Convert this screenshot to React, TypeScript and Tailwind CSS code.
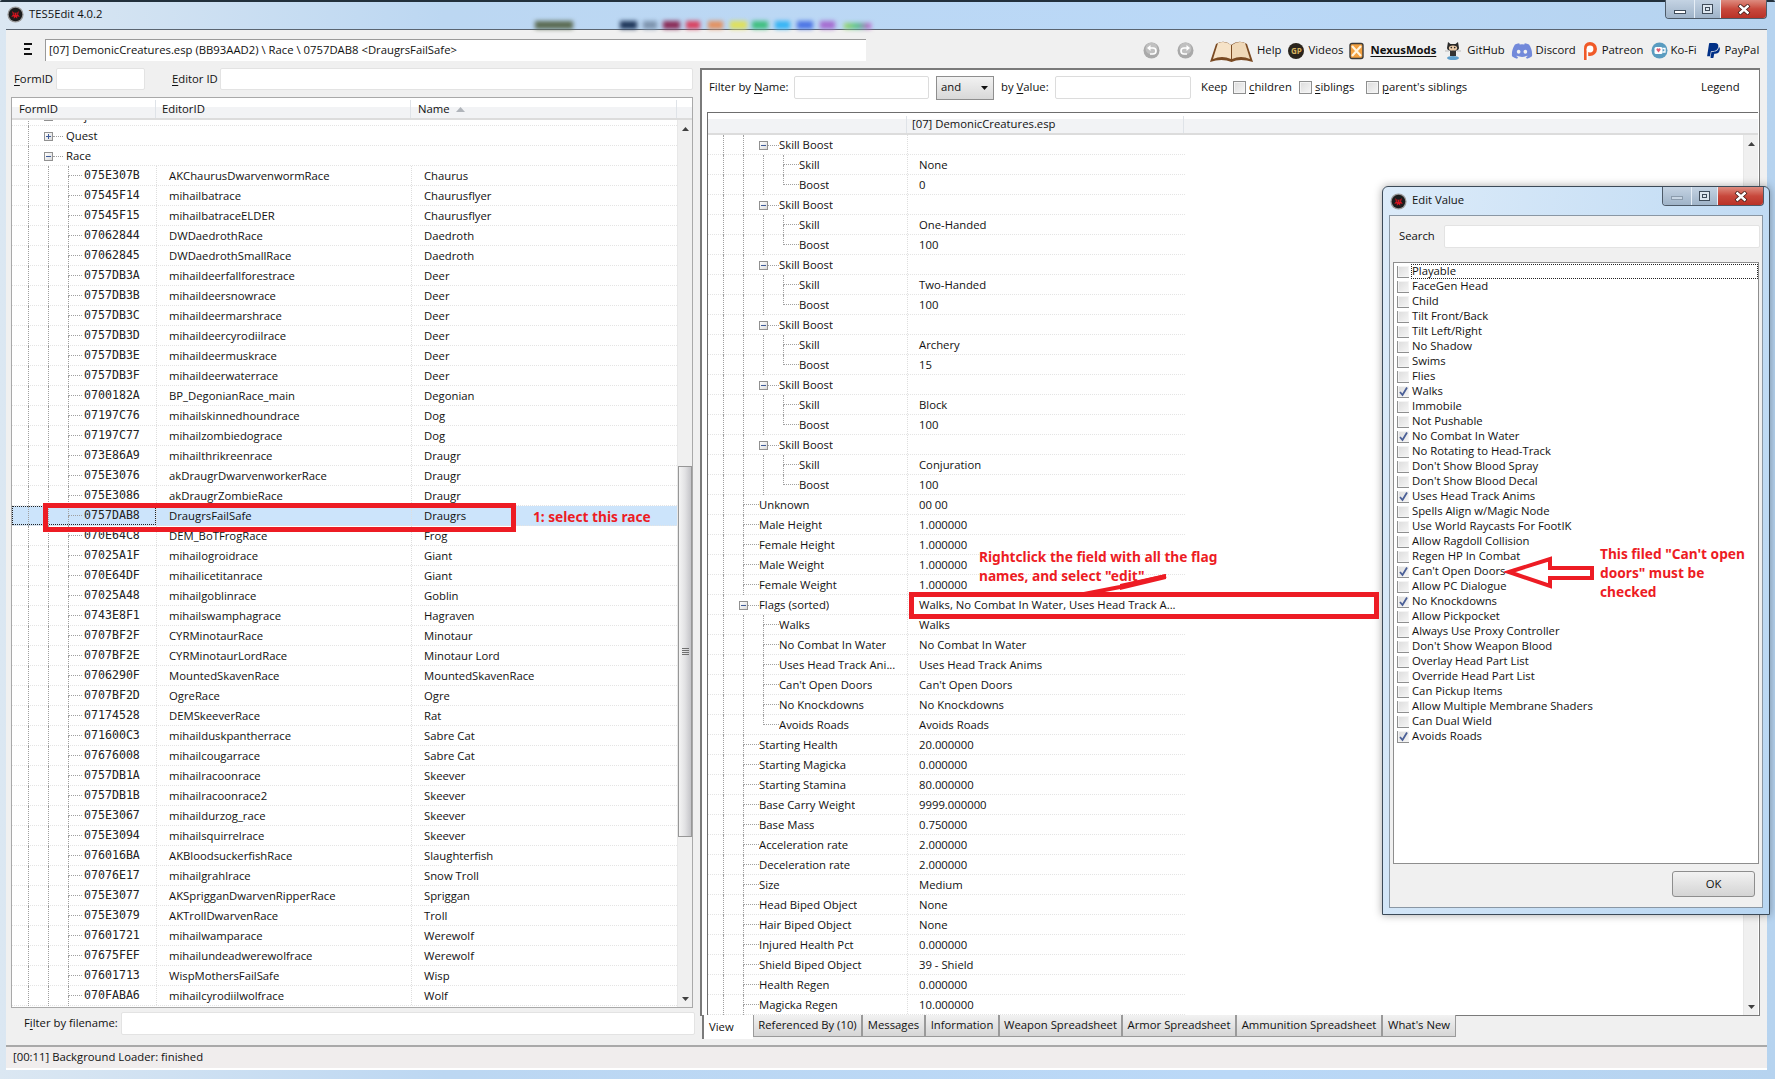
import React from "react";
import { FaDiscord, FaPaypal } from "react-icons/fa";

const races: [string, string, string][] = [
  ["075E307B", "AKChaurusDwarvenwormRace", "Chaurus"],
  ["07545F14", "mihailbatrace", "Chaurusflyer"],
  ["07545F15", "mihailbatraceELDER", "Chaurusflyer"],
  ["07062844", "DWDaedrothRace", "Daedroth"],
  ["07062845", "DWDaedrothSmallRace", "Daedroth"],
  ["0757DB3A", "mihaildeerfallforestrace", "Deer"],
  ["0757DB3B", "mihaildeersnowrace", "Deer"],
  ["0757DB3C", "mihaildeermarshrace", "Deer"],
  ["0757DB3D", "mihaildeercyrodiilrace", "Deer"],
  ["0757DB3E", "mihaildeermuskrace", "Deer"],
  ["0757DB3F", "mihaildeerwaterrace", "Deer"],
  ["0700182A", "BP_DegonianRace_main", "Degonian"],
  ["07197C76", "mihailskinnedhoundrace", "Dog"],
  ["07197C77", "mihailzombiedograce", "Dog"],
  ["073E86A9", "mihailthrikreenrace", "Draugr"],
  ["075E3076", "akDraugrDwarvenworkerRace", "Draugr"],
  ["075E3086", "akDraugrZombieRace", "Draugr"],
  ["0757DAB8", "DraugrsFailSafe", "Draugrs"],
  ["070E64C8", "DEM_BoTFrogRace", "Frog"],
  ["07025A1F", "mihailogroidrace", "Giant"],
  ["070E64DF", "mihailicetitanrace", "Giant"],
  ["07025A48", "mihailgoblinrace", "Goblin"],
  ["0743E8F1", "mihailswamphagrace", "Hagraven"],
  ["0707BF2F", "CYRMinotaurRace", "Minotaur"],
  ["0707BF2E", "CYRMinotaurLordRace", "Minotaur Lord"],
  ["0706290F", "MountedSkavenRace", "MountedSkavenRace"],
  ["0707BF2D", "OgreRace", "Ogre"],
  ["07174528", "DEMSkeeverRace", "Rat"],
  ["071600C3", "mihailduskpantherrace", "Sabre Cat"],
  ["07676008", "mihailcougarrace", "Sabre Cat"],
  ["0757DB1A", "mihailracoonrace", "Skeever"],
  ["0757DB1B", "mihailracoonrace2", "Skeever"],
  ["075E3067", "mihaildurzog_race", "Skeever"],
  ["075E3094", "mihailsquirrelrace", "Skeever"],
  ["076016BA", "AKBloodsuckerfishRace", "Slaughterfish"],
  ["07076E17", "mihailgrahlrace", "Snow Troll"],
  ["075E3077", "AKSprigganDwarvenRipperRace", "Spriggan"],
  ["075E3079", "AKTrollDwarvenRace", "Troll"],
  ["07601721", "mihailwamparace", "Werewolf"],
  ["07675FEF", "mihailundeadwerewolfrace", "Werewolf"],
  ["07601713", "WispMothersFailSafe", "Wisp"],
  ["070FABA6", "mihailcyrodiilwolfrace", "Wolf"],
];

type RT = { l: number; kind: "box" | "leaf"; label: string; value?: string; last?: boolean };
const skills: [string, string][] = [
  ["None", "0"],
  ["One-Handed", "100"],
  ["Two-Handed", "100"],
  ["Archery", "15"],
  ["Block", "100"],
  ["Conjuration", "100"],
];
const recordRows: RT[] = [
  ...skills.flatMap(([s, b]): RT[] => [
    { l: 2, kind: "box", label: "Skill Boost" },
    { l: 3, kind: "leaf", label: "Skill", value: s },
    { l: 3, kind: "leaf", label: "Boost", value: b, last: true },
  ]),
  { l: 1, kind: "leaf", label: "Unknown", value: "00 00" },
  { l: 1, kind: "leaf", label: "Male Height", value: "1.000000" },
  { l: 1, kind: "leaf", label: "Female Height", value: "1.000000" },
  { l: 1, kind: "leaf", label: "Male Weight", value: "1.000000" },
  { l: 1, kind: "leaf", label: "Female Weight", value: "1.000000" },
  { l: 1, kind: "box", label: "Flags (sorted)", value: "Walks, No Combat In Water, Uses Head Track A..." },
  { l: 2, kind: "leaf", label: "Walks", value: "Walks" },
  { l: 2, kind: "leaf", label: "No Combat In Water", value: "No Combat In Water" },
  { l: 2, kind: "leaf", label: "Uses Head Track Ani...", value: "Uses Head Track Anims" },
  { l: 2, kind: "leaf", label: "Can't Open Doors", value: "Can't Open Doors" },
  { l: 2, kind: "leaf", label: "No Knockdowns", value: "No Knockdowns" },
  { l: 2, kind: "leaf", label: "Avoids Roads", value: "Avoids Roads", last: true },
  { l: 1, kind: "leaf", label: "Starting Health", value: "20.000000" },
  { l: 1, kind: "leaf", label: "Starting Magicka", value: "0.000000" },
  { l: 1, kind: "leaf", label: "Starting Stamina", value: "80.000000" },
  { l: 1, kind: "leaf", label: "Base Carry Weight", value: "9999.000000" },
  { l: 1, kind: "leaf", label: "Base Mass", value: "0.750000" },
  { l: 1, kind: "leaf", label: "Acceleration rate", value: "2.000000" },
  { l: 1, kind: "leaf", label: "Deceleration rate", value: "2.000000" },
  { l: 1, kind: "leaf", label: "Size", value: "Medium" },
  { l: 1, kind: "leaf", label: "Head Biped Object", value: "None" },
  { l: 1, kind: "leaf", label: "Hair Biped Object", value: "None" },
  { l: 1, kind: "leaf", label: "Injured Health Pct", value: "0.000000" },
  { l: 1, kind: "leaf", label: "Shield Biped Object", value: "39 - Shield" },
  { l: 1, kind: "leaf", label: "Health Regen", value: "0.000000" },
  { l: 1, kind: "leaf", label: "Magicka Regen", value: "10.000000" },
];

const flags: [string, boolean][] = [
  ["Playable", false], ["FaceGen Head", false], ["Child", false], ["Tilt Front/Back", false],
  ["Tilt Left/Right", false], ["No Shadow", false], ["Swims", false], ["Flies", false],
  ["Walks", true], ["Immobile", false], ["Not Pushable", false], ["No Combat In Water", true],
  ["No Rotating to Head-Track", false], ["Don't Show Blood Spray", false], ["Don't Show Blood Decal", false],
  ["Uses Head Track Anims", true], ["Spells Align w/Magic Node", false], ["Use World Raycasts For FootIK", false],
  ["Allow Ragdoll Collision", false], ["Regen HP In Combat", false], ["Can't Open Doors", true],
  ["Allow PC Dialogue", false], ["No Knockdowns", true], ["Allow Pickpocket", false],
  ["Always Use Proxy Controller", false], ["Don't Show Weapon Blood", false], ["Overlay Head Part List", false],
  ["Override Head Part List", false], ["Can Pickup Items", false], ["Allow Multiple Membrane Shaders", false],
  ["Can Dual Wield", false], ["Avoids Roads", true],
];

const tabs: [string, string][] = [
  ["Referenced By (10)", "w-[109px]"],
  ["Messages", "w-[63px]"],
  ["Information", "w-[74px]"],
  ["Weapon Spreadsheet", "w-[123px]"],
  ["Armor Spreadsheet", "w-[114px]"],
  ["Ammunition Spreadsheet", "w-[146px]"],
  ["What's New", "w-[74px]"],
];

const spots = [
  "ml-[55px] w-[38px] bg-[#5a6a50]", "ml-[47px] w-[17px] bg-[#1d3558]", "ml-[6px] w-[14px] bg-[#7d93ad]",
  "ml-[6px] w-[17px] bg-[#8a2a55]", "ml-[6px] w-[14px] bg-[#d9415f]", "ml-[8px] w-[15px] bg-[#e39160]",
  "ml-[7px] w-[17px] bg-[#dfe05a]", "ml-[5px] w-[16px] bg-[#3fbf7f]", "ml-[7px] w-[15px] bg-[#35b4f4]",
  "ml-[7px] w-[16px] bg-[#4c74e4]", "ml-[7px] w-[15px] bg-[#a56cd0]",
];

function AppIcon({ size = 17 }: { size?: number }) {
  return (
    <svg width={size} height={size} viewBox="0 0 20 20" className="shrink-0">
      <circle cx="10" cy="10" r="9.5" fill="#9a9a9a" />
      <circle cx="10" cy="10" r="8" fill="#1c1c1c" />
      <path d="M6 6 L8 8 H12 L14 6 L13 10 L15 13 L12 12 L12 15 L10 13 L8 15 L8 12 L5 13 L7 10 Z" fill="#d8121e" />
      <circle cx="8.5" cy="9.5" r="0.9" fill="#222" />
      <circle cx="11.5" cy="9.5" r="0.9" fill="#222" />
    </svg>
  );
}

function WinControls({ faded }: { faded?: boolean }) {
  return (
    <div className="flex h-[19px] w-[102px] shrink-0 overflow-hidden rounded-b-[4px] border border-t-0 border-[#4d5a68]">
      <div className="flex w-[29px] items-center justify-center border-r border-[#e6eef6] bg-gradient-to-b from-[#c4d3e3] to-[#9fb3c8]">
        <div className={faded ? "mt-[3px] h-[4px] w-[12px] border border-[#8c9cad] bg-[#c8d6e4]" : "mt-[6px] h-[4px] w-[12px] border border-[#3f4c5a] bg-white"} />
      </div>
      <div className="flex w-[26px] items-center justify-center border-r border-[#e6eef6] bg-gradient-to-b from-[#c4d3e3] to-[#9fb3c8]">
        <div className="flex h-[10px] w-[11px] items-center justify-center border border-[#3f4c5a] bg-[#dde6ef]">
          <div className="h-[4px] w-[5px] border border-[#3f4c5a]" />
        </div>
      </div>
      <div className="flex flex-1 items-center justify-center bg-gradient-to-b from-[#dd8b7f] via-[#c8483c] to-[#b93227]">
        <svg width="14" height="11" viewBox="0 0 14 11">
          <path d="M2 1 L12 10 M12 1 L2 10" stroke="#3d1a16" strokeWidth="4" />
          <path d="M2.5 1.5 L11.5 9.5 M11.5 1.5 L2.5 9.5" stroke="#fff" strokeWidth="2.4" />
        </svg>
      </div>
    </div>
  );
}

function Check({ checked }: { checked?: boolean }) {
  return (
    <div className="flex h-[13px] w-[13px] shrink-0 items-center justify-center border border-[#8e8f8f] bg-gradient-to-br from-[#dcdcdc] to-[#f6f6f6] shadow-[inset_0_0_0_1px_#f4f4f4]">
      {checked && (
        <svg width="11" height="11" viewBox="0 0 11 11">
          <path d="M2 6 L4.5 9 L9 1.5" fill="none" stroke="#4a5f97" strokeWidth="1.8" />
        </svg>
      )}
    </div>
  );
}

function TreeBox({ open }: { open?: boolean }) {
  return (
    <div className="relative z-10 flex h-[9px] w-[9px] shrink-0 items-center justify-center border border-[#919191] bg-gradient-to-br from-white to-[#dcdcdc]">
      <div className="relative h-px w-[5px] bg-[#3f5c9a]">
        {!open && <div className="absolute left-[2px] top-[-2px] h-[5px] w-px bg-[#3f5c9a]" />}
      </div>
    </div>
  );
}

function Guide() {
  return <div className="h-[20px] w-[20px] shrink-0 border-l border-dotted border-[#a0a0a0]" />;
}

function Leaf({ width, last }: { width: string; last?: boolean }) {
  return (
    <div className={`h-[20px] shrink-0 ${width}`}>
      <div className="h-[10px] border-b border-l border-dotted border-[#a0a0a0]" />
      {!last && <div className="h-[10px] border-l border-dotted border-[#a0a0a0]" />}
    </div>
  );
}

function BoxNode({ open }: { open?: boolean }) {
  return (
    <div className="flex h-[20px] w-[18px] shrink-0 items-center">
      <div className="ml-[-4px]">
        <TreeBox open={open} />
      </div>
      <div className="h-px w-[10px] border-b border-dotted border-[#a0a0a0]" />
    </div>
  );
}

function Scrollbar({ thumb }: { thumb?: boolean }) {
  return (
    <div className="flex w-[15px] shrink-0 flex-col border-l border-[#e8e8e8] bg-[#f0f0f0]">
      <div className="flex h-[17px] shrink-0 items-center justify-center text-[#404040]">
        <svg width="7" height="4" viewBox="0 0 7 4"><path d="M3.5 0 L7 4 H0 Z" fill="currentColor" /></svg>
      </div>
      {thumb ? (
        <>
          <div className="h-[329px] shrink-0" />
          <div className="flex h-[371px] shrink-0 items-center justify-center border border-[#979797] bg-gradient-to-r from-[#f4f4f4] via-[#e2e2e4] to-[#c4c4c8]">
            <div className="flex flex-col gap-px">
              <div className="h-px w-[7px] bg-[#707070]" />
              <div className="h-px w-[7px] bg-[#707070]" />
              <div className="h-px w-[7px] bg-[#707070]" />
              <div className="h-px w-[7px] bg-[#707070]" />
            </div>
          </div>
        </>
      ) : null}
      <div className="flex-1" />
      <div className="flex h-[17px] shrink-0 items-center justify-center text-[#404040]">
        <svg width="7" height="4" viewBox="0 0 7 4"><path d="M3.5 4 L7 0 H0 Z" fill="currentColor" /></svg>
      </div>
    </div>
  );
}

function U({ children }: { children: React.ReactNode }) {
  return <span className="underline underline-offset-2">{children}</span>;
}

function CircleBtn({ redo }: { redo?: boolean }) {
  return (
    <svg width="17" height="17" viewBox="0 0 17 17" className="shrink-0">
      <circle cx="8.5" cy="8.5" r="8" fill="#a9a9a9" />
      <circle cx="8.5" cy="6.5" r="6" fill="#c0c0c0" />
      <g transform={redo ? "translate(17,0) scale(-1,1)" : undefined}>
        <path d="M6 6 H10 A3 3 0 0 1 10 12 H7" fill="none" stroke="#fff" strokeWidth="1.6" />
        <path d="M7.5 3 L4 6 L7.5 9 Z" fill="#fff" />
      </g>
    </svg>
  );
}

function Toolbar() {
  return (
    <div className="flex h-[38px] shrink-0 items-center">
      <div className="ml-[18px] flex w-[21px] shrink-0 flex-col gap-[3px]">
        <div className="h-[2px] w-[8px] bg-[#111]" />
        <div className="h-[2px] w-[6px] bg-[#111]" />
        <div className="h-[2px] w-[8px] bg-[#111]" />
      </div>
      <div className="mt-[1px] flex h-[22px] w-[821px] shrink-0 items-center border-l border-t border-[#9a9a9a] bg-white pl-[3px]">
        [07] DemonicCreatures.esp (BB93AAD2) \ Race \ 0757DAB8 &lt;DraugrsFailSafe&gt;
      </div>
      <div className="ml-[277px] mt-[3px] flex shrink-0 items-center">
        <CircleBtn />
        <div className="ml-[17px]"><CircleBtn redo /></div>
        <svg width="43" height="24" viewBox="0 0 43 24" className="ml-[16px] shrink-0">
          <path d="M0 23 L6 5 Q14 0 21 6 Q29 0 37 5 L43 23 Q30 19 21.5 23 Q12 19 0 23 Z" fill="#7a4a22" />
          <path d="M3 20 L8 4 Q15 1 21 6 V20 Q12 16 3 20 Z" fill="#f6e3c8" />
          <path d="M40 20 L35 4 Q28 1 22 6 V20 Q31 16 40 20 Z" fill="#efd8b8" />
        </svg>
        <span className="ml-[4px]">Help</span>
        <div className="ml-[7px] flex h-[16px] w-[16px] items-center justify-center rounded-full bg-[#2a241c] text-[8px] font-bold text-[#d6b25e]">GP</div>
        <span className="ml-[4px]">Videos</span>
        <svg width="15" height="18" viewBox="0 0 15 18" className="ml-[6px] shrink-0">
          <rect x="1" y="1.5" width="13" height="15" rx="2" fill="#f2a040" stroke="#3a3a3a" strokeWidth="1.4" />
          <path d="M3 4 L12 14 M12 4 L3 14" stroke="#fff3dc" strokeWidth="2.2" />
        </svg>
        <span className="ml-[6px] font-bold underline underline-offset-2">NexusMods</span>
        <svg width="16" height="20" viewBox="0 0 16 20" className="ml-[9px] shrink-0">
          <path d="M3 1 L5.5 3 H10.5 L13 1 L14 7 Q14 10 8 10 Q2 10 2 7 Z" fill="#2b2b2b" />
          <ellipse cx="8" cy="7" rx="4.2" ry="2.6" fill="#eac9a6" />
          <circle cx="6.3" cy="6.6" r="0.8" fill="#222" />
          <circle cx="9.7" cy="6.6" r="0.8" fill="#222" />
          <rect x="5" y="10" width="6" height="5" fill="#333" />
          <path d="M0 10 H4 M12 10 H16" stroke="#bbb" />
          <ellipse cx="8" cy="17" rx="6" ry="2" fill="#5f9fcc" />
        </svg>
        <span className="ml-[6px]">GitHub</span>
        <FaDiscord size={22} className="ml-[6px] shrink-0 text-[#7289da]" />
        <span className="ml-[3px]">Discord</span>
        <svg width="16" height="20" viewBox="0 0 16 20" className="ml-[6px] shrink-0">
          <path d="M8 1 A7 7 0 0 1 8 15 H6 V19 H2 V8 A6 6 0 0 1 8 1 Z" fill="#f05a28" />
          <circle cx="8" cy="8" r="3.4" fill="#fff" />
          <rect x="4.6" y="8" width="1.6" height="11" fill="#fff" />
        </svg>
        <span className="ml-[4px]">Patreon</span>
        <svg width="17" height="17" viewBox="0 0 17 17" className="ml-[7px] shrink-0">
          <circle cx="8.5" cy="8.5" r="8" fill="#5a9cc0" />
          <rect x="3.5" y="5" width="8" height="7" rx="1.5" fill="#fff" />
          <path d="M11.5 6.5 H14 V10 H11.5" fill="none" stroke="#fff" strokeWidth="1.3" />
          <path d="M7.5 10.5 L5.5 8 A1.1 1.1 0 0 1 7.5 7 A1.1 1.1 0 0 1 9.5 8 Z" fill="#e05a70" />
        </svg>
        <span className="ml-[3px]">Ko-Fi</span>
        <FaPaypal size={17} className="ml-[8px] shrink-0 text-[#003087]" />
        <span className="ml-[3px]">PayPal</span>
      </div>
    </div>
  );
}

function LeftColumn() {
  return (
    <div className="flex w-[692px] shrink-0 flex-col whitespace-nowrap">
      <div className="flex h-[29px] shrink-0 items-start pl-[8px]">
        <span className="mt-[3px] w-[42px] shrink-0"><U>F</U>ormID</span>
        <div className="h-[22px] w-[89px] shrink-0 rounded-[2px] border border-[#e3e3e3] bg-white" />
        <span className="ml-[27px] mt-[3px] w-[48px] shrink-0"><U>E</U>ditor ID</span>
        <div className="h-[22px] w-[473px] shrink-0 rounded-[2px] border border-[#e3e3e3] bg-white" />
      </div>
      <div className="ml-[5px] flex h-[911px] w-[682px] shrink-0 flex-col border border-[#a9a9a9] bg-white">
        <div className="flex h-[22px] shrink-0 border-b-2 border-[#dcdcdc] bg-[linear-gradient(#ffffff_45%,#f2f3f5_45%)] pt-[2px]">
          <div className="flex w-[144px] shrink-0 items-center border-r border-[#dfe3e8] pl-[7px]">FormID</div>
          <div className="flex w-[255px] shrink-0 items-center border-r border-[#dfe3e8] pl-[6px]">EditorID</div>
          <div className="flex w-[266px] shrink-0 items-center gap-[6px] border-r border-[#dfe3e8] pl-[7px]">
            Name
            <svg width="9" height="5" viewBox="0 0 9 5"><path d="M4.5 0 L9 5 H0 Z" fill="#b0b4ba" /></svg>
          </div>
        </div>
        <div className="flex min-h-0 flex-1">
          <div className="min-w-0 flex-1 overflow-hidden">
            <div className="mt-[-14px]">
              <LeftTop label="Projectile" />
              <LeftTop label="Quest" />
              <LeftTop label="Race" open />
              {races.map((r) => {
                const sel = r[2] === "Draugrs";
                return (
                  <div key={r[0]} className={`flex h-[20px] border-b border-dotted border-[#e4e4e4] ${sel ? "bg-[#cce4fb]" : ""}`}>
                    <div className={`flex w-[144px] shrink-0 pl-[16px] ${sel ? "outline-1 outline-dotted outline-offset-[-1px] outline-[#222]" : ""}`}>
                      <Guide />
                      <Guide />
                      <Leaf width="w-[14px]" />
                      <span className="ml-[2px] leading-[19px] font-['DejaVu_Sans_Mono',monospace] text-[11.6px] text-[#222]">{r[0]}</span>
                    </div>
                    <div className="w-[255px] shrink-0 truncate border-l border-dotted border-[#dedede] pl-[12px] leading-[19px]">{r[1]}</div>
                    <div className="flex-1 truncate border-l border-dotted border-[#dedede] pl-[12px] leading-[19px]">{r[2]}</div>
                  </div>
                );
              })}
            </div>
          </div>
          <Scrollbar thumb />
        </div>
      </div>
      <div className="flex flex-1 items-center pl-[18px] pb-[6px]">
        <span className="w-[97px] shrink-0">F<U>i</U>lter by filename:</span>
        <div className="h-[23px] w-[574px] shrink-0 rounded-[2px] border border-[#e3e3e3] bg-white" />
      </div>
    </div>
  );
}

function LeftTop({ label, open }: { label: string; open?: boolean }) {
  return (
    <div className="flex h-[20px] border-b border-dotted border-[#e4e4e4] pl-[16px]">
      <Guide />
      <BoxNode open={open} />
      <span className="leading-[19px]">{label}</span>
    </div>
  );
}

function RightColumn() {
  return (
    <div className="ml-[2px] flex min-w-0 flex-1 flex-col whitespace-nowrap pr-[7px]">
      <div className="flex h-[948px] shrink-0 flex-col border-l-[2px] border-r border-t-[2px] border-b-[1px] border-[#7a7a7a] bg-white">
        <div className="flex h-[42px] shrink-0 items-center pb-[7px] pl-[7px]">
          <span className="w-[85px] shrink-0">Filter by <U>N</U>ame:</span>
          <div className="h-[23px] w-[135px] shrink-0 rounded-[2px] border border-[#dcdcdc] bg-white" />
          <div className="ml-[7px] flex h-[24px] w-[58px] shrink-0 items-center justify-between border border-[#8e8e8e] bg-gradient-to-b from-[#f2f2f2] to-[#d8d8d8] pl-[4px] pr-[5px]">
            and
            <svg width="7" height="4" viewBox="0 0 7 4"><path d="M3.5 4 L7 0 H0 Z" fill="#111" /></svg>
          </div>
          <span className="ml-[7px] w-[54px] shrink-0">by <U>V</U>alue:</span>
          <div className="h-[23px] w-[136px] shrink-0 rounded-[2px] border border-[#dcdcdc] bg-white" />
          <span className="ml-[10px] w-[32px] shrink-0">Keep</span>
          <Check /><span className="ml-[3px] w-[50px] shrink-0"><U>c</U>hildren</span>
          <Check /><span className="ml-[3px] w-[51px] shrink-0"><U>s</U>iblings</span>
          <Check /><span className="ml-[3px] w-[319px] shrink-0"><U>p</U>arent's siblings</span>
          <span>Legend</span>
        </div>
        <div className="ml-[5px] mr-[1px] flex min-h-0 flex-1 flex-col border-l border-t border-[#6e6e6e]">
          <div className="flex h-[22px] shrink-0 border-b-2 border-[#dcdcdc] bg-[linear-gradient(#ffffff_30%,#f2f3f5_30%)] pt-[3px]">
            <div className="w-[199px] shrink-0 border-r border-[#dfe3e8]" />
            <div className="flex w-[277px] shrink-0 items-center border-r border-[#dfe3e8] pl-[5px]">[07] DemonicCreatures.esp</div>
          </div>
          <div className="flex min-h-0 flex-1">
            <div className="min-w-0 flex-1 overflow-hidden">
              {recordRows.map((r, i) => (
                <div key={i} className="flex h-[20px]">
                  <div className="flex w-[477px] shrink-0 border-b border-dotted border-[#e4e4e4]">
                    <div className="flex w-[199px] shrink-0 pl-[15px]">
                      <Guide />
                      {r.l >= 2 && <Guide />}
                      {r.l >= 3 && <Guide />}
                      {r.kind === "box" ? (
                        <div className="flex h-[20px] w-[16px] shrink-0 items-center">
                          <div className="ml-[-4px]"><TreeBox open /></div>
                          <div className="h-px w-[11px] border-b border-dotted border-[#a0a0a0]" />
                        </div>
                      ) : (
                        <Leaf width="w-[16px]" last={r.last} />
                      )}
                      <span className="truncate leading-[19px]">{r.label}</span>
                    </div>
                    <div className="flex-1 truncate border-l border-dotted border-[#dedede] pl-[11px] leading-[19px]">{r.value ?? ""}</div>
                  </div>
                </div>
              ))}
            </div>
            <Scrollbar />
          </div>
        </div>
      </div>
      <div className="ml-[2px] mt-[-1px] flex h-[26px] shrink-0 items-start">
        <div className="flex h-[24px] w-[51px] shrink-0 items-center border-l-[2px] border-[#7a7a7a] bg-white pl-[5px]">View</div>
        {tabs.map(([t, w]) => (
          <div key={t} className={`flex h-[22px] shrink-0 items-center justify-center border-x border-b border-[#9a9a9a] bg-gradient-to-b from-[#f2f2f2] to-[#d6d6d6] ${w}`}>{t}</div>
        ))}
      </div>
    </div>
  );
}

function EditDialog() {
  return (
    <div className="absolute left-[1382px] top-[186px] flex h-[729px] w-[388px] flex-col whitespace-nowrap rounded-t-[6px] border border-[#3c4a58] bg-[linear-gradient(100deg,#dcebf9,#b8d6f2)] shadow-[0_0_8px_rgba(0,0,0,0.35)]">
      <div className="flex h-[28px] shrink-0 items-start">
        <div className="ml-[7px] mt-[6px]"><AppIcon size={17} /></div>
        <span className="ml-[5px] mt-[5px] flex-1">Edit Value</span>
        <div className="mr-[5px]"><WinControls faded /></div>
      </div>
      <div className="mx-[6px] mb-[6px] flex min-h-0 flex-1 flex-col border border-[#8a97a4] bg-[#f0f0f0]">
        <div className="mt-[9px] flex h-[23px] shrink-0 items-center pl-[9px]">
          <span className="w-[45px] shrink-0">Search</span>
          <div className="h-[23px] w-[316px] shrink-0 rounded-[2px] border border-[#e3e3e3] bg-white" />
        </div>
        <div className="mx-[3px] mt-[14px] flex h-[602px] shrink-0 flex-col border border-[#8e8e8e] bg-white pl-[3px] pt-[1px]">
          {flags.map(([f, c], i) => (
            <div key={f} className="flex h-[15px] shrink-0 items-center">
              <div className="h-[12px] w-[12px] shrink-0 overflow-hidden">
                <div className="ml-[-0.5px] mt-[-0.5px]"><Check checked={c} /></div>
              </div>
              <div className={`ml-[2px] flex h-[15px] w-[350px] items-center pl-[1px] ${i === 0 ? "outline-1 outline-dotted outline-offset-[-1px] outline-[#222]" : ""}`}>{f}</div>
            </div>
          ))}
        </div>
        <div className="mt-[7px] flex justify-end pr-[7px]">
          <div className="flex h-[26px] w-[83px] items-center justify-center rounded-[3px] border border-[#8e8e8e] bg-gradient-to-b from-[#f2f2f2] to-[#d4d4d4]">OK</div>
        </div>
      </div>
    </div>
  );
}

function Notes() {
  const red = "absolute whitespace-nowrap font-['Noto_Sans',sans-serif] font-bold text-[13.7px] leading-[19px] text-[#ed1c24]";
  return (
    <>
      <div className="absolute left-[43px] top-[503px] h-[29px] w-[473px] border-[5px] border-[#ed1c24]" />
      <div className={`${red} left-[533px] top-[507px]`}>1: select this race</div>
      <div className="absolute left-[909px] top-[592px] h-[27px] w-[470px] border-[5px] border-[#ed1c24]" />
      <div className={`${red} left-[979px] top-[547px]`}>
        Rightclick the field with all the flag<br />names, and select "edit"
      </div>
      <div className={`${red} left-[1600px] top-[544px]`}>
        This filed "Can't open<br />doors" must be<br />checked
      </div>
      <svg className="absolute left-[1080px] top-[570px]" width="95" height="30" viewBox="0 0 95 30">
        <path d="M86 6 L40 17 L4 24" stroke="#ed1c24" strokeWidth="4" fill="none" />
        <path d="M40 14 L86 4 L86 9 L40 20 Z" fill="#ed1c24" />
      </svg>
      <svg className="absolute left-[1504px] top-[555px]" width="92" height="36" viewBox="0 0 92 36">
        <path d="M5 17 L46 4 V13 H88 V23 H46 V31 Z" fill="none" stroke="#ed1c24" strokeWidth="4" />
      </svg>
    </>
  );
}

export default function App() {
  return (
    <div className="relative h-[1079px] w-[1775px] overflow-hidden bg-[linear-gradient(90deg,#dbe7f2,#bcd7f2_25%,#bad8f7_70%,#b6d3ef)] font-['Open_Sans',sans-serif] text-[11.3px] text-[#111]">
      <div className="h-[2px] rounded-t-[6px] bg-[#22303c]" />
      <div className="flex h-[27px] items-start">
        <div className="ml-[7px] mt-[4px]"><AppIcon /></div>
        <span className="ml-[5px] mt-[4px] w-[451px]">TES5Edit 4.0.2</span>
        <div className="flex h-[27px] flex-1 items-end overflow-hidden blur-[2px]">
          {spots.map((s) => (
            <div key={s} className={`h-[8px] shrink-0 ${s}`} />
          ))}
          <div className="ml-[9px] h-[6px] w-[27px] shrink-0 bg-[linear-gradient(90deg,#9fd86a,#55c08a,#c85ad0)]" />
        </div>
        <div className="mr-[8px] mt-[-2px] shrink-0"><WinControls /></div>
      </div>
      <div className="mx-[6px] flex h-[1041px] w-[1761px] flex-col border-t border-[#5a6470] bg-[#f0f0f0]">
        <Toolbar />
        <div className="flex h-[977px] shrink-0">
          <LeftColumn />
          <RightColumn />
        </div>
        <div className="flex h-[25px] shrink-0 items-center border-y-2 border-[#a9a9a9] border-b-white bg-[#f0eded] pb-[1px] pl-[7px]">
          [00:11] Background Loader: finished
        </div>
      </div>
      <EditDialog />
      <Notes />
    </div>
  );
}
